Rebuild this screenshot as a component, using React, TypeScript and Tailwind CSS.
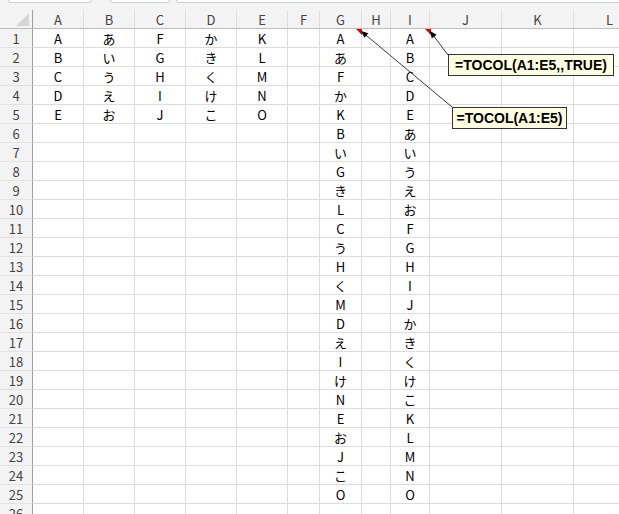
import React from "react";

const cols = [
  { name: "A", w: "w-[51px]" },
  { name: "B", w: "w-[51px]" },
  { name: "C", w: "w-[51px]" },
  { name: "D", w: "w-[51px]" },
  { name: "E", w: "w-[51px]" },
  { name: "F", w: "w-[32px]" },
  { name: "G", w: "w-[42px]" },
  { name: "H", w: "w-[29px]" },
  { name: "I", w: "w-[39px]" },
  { name: "J", w: "w-[72px]" },
  { name: "K", w: "w-[72px]" },
  { name: "L", w: "w-[72px]" },
];

const src = [
  ["A", "B", "C", "D", "E"],
  ["あ", "い", "う", "え", "お"],
  ["F", "G", "H", "I", "J"],
  ["か", "き", "く", "け", "こ"],
  ["K", "L", "M", "N", "O"],
];

// G: row by row, I: column by column
const colG: string[] = [];
for (let r = 0; r < 5; r++) for (let c = 0; c < 5; c++) colG.push(src[c][r]);
const colI: string[] = src.flat();

const cellValue = (row: number, col: number) => {
  if (col < 5 && row < 5) return src[col][row];
  if (col === 6) return colG[row] ?? "";
  if (col === 8) return colI[row] ?? "";
  return "";
};

const arrowHead = (x1: number, y1: number, x2: number, y2: number) => {
  const dx = x2 - x1;
  const dy = y2 - y1;
  const len = Math.hypot(dx, dy);
  const ux = dx / len;
  const uy = dy / len;
  const l = 7;
  const w = 3;
  const bx = x2 - ux * l;
  const by = y2 - uy * l;
  return `${x2},${y2} ${bx - uy * w},${by + ux * w} ${bx + uy * w},${by - ux * w}`;
};

export default function App() {
  const rows = Array.from({ length: 26 }, (_, i) => i);

  return (
    <div
      className="relative w-[619px] h-[514px] overflow-hidden bg-white"
      style={{ fontFamily: '"Noto Sans CJK JP", "Noto Sans", sans-serif' }}
    >
      {/* top strip */}
      <div className="h-[10px] bg-[#f3f3f3] flex gap-[18px] pl-[8px]">
        <div className="w-[84px] h-[3px] bg-white border border-t-0 border-[#d0d0d0] rounded-b-[4px]" />
        <div className="w-[60px] h-[3px] bg-white border border-t-0 border-[#d0d0d0] rounded-b-[4px] -ml-[0px]" />
        <div className="flex-1 h-[3px] bg-white border border-t-0 border-r-0 border-[#d0d0d0] rounded-bl-[4px] -ml-[12px]" />
      </div>

      {/* column headers */}
      <div className="flex h-[19px] bg-[#f3f3f3] border-b border-[#bdbdbd]">
        <div className="relative w-[33px] shrink-0 border-r border-[#9e9e9e]">
          <div className="absolute right-[3px] bottom-[2px] w-0 h-0 border-l-[13px] border-l-transparent border-b-[13px] border-b-[#d6d6d6]" />
        </div>
        {cols.map((c) => (
          <div
            key={c.name}
            className={`${c.w} shrink-0 flex items-center justify-center text-[13px] text-[#444] leading-none border-r border-[#dedede]`}
          >
            {c.name}
          </div>
        ))}
      </div>

      {/* rows */}
      {rows.map((r) => (
        <div key={r} className="flex h-[19px]">
          <div className="w-[33px] shrink-0 bg-[#f3f3f3] border-r border-b border-r-[#9e9e9e] border-b-[#e2e2e2] flex items-center justify-center text-[13px] text-[#444] leading-none">
            {r + 1}
          </div>
          {cols.map((c, ci) => (
            <div
              key={c.name}
              className={`${c.w} shrink-0 border-r border-b border-[#dcdcdc] flex items-center justify-center text-[13px] text-black leading-none`}
            >
              {r < 25 ? cellValue(r, ci) : ""}
            </div>
          ))}
        </div>
      ))}

      {/* comment indicators and arrows */}
      <svg className="absolute left-0 top-0 pointer-events-none" width="619" height="514">
        <polygon points="356,29 362,29 362,35" fill="#e00000" />
        <polygon points="425,29 431,29 431,35" fill="#e00000" />
        <line x1="452" y1="107" x2="361" y2="31" stroke="#3a3a3a" strokeWidth="1" />
        <polygon points={arrowHead(452, 107, 361, 31)} fill="#000" />
        <line x1="448" y1="55" x2="430" y2="31" stroke="#3a3a3a" strokeWidth="1" />
        <polygon points={arrowHead(448, 55, 430, 31)} fill="#000" />
      </svg>

      <div
        className="absolute left-[448px] top-[54px] w-[166px] h-[22px] bg-[#ffffe1] border border-[#333] flex items-center justify-center text-[14px] font-bold text-black leading-none"
        style={{ fontFamily: '"Liberation Sans", Arial, sans-serif' }}
      >
        =TOCOL(A1:E5,,TRUE)
      </div>
      <div
        className="absolute left-[452px] top-[107px] w-[115px] h-[22px] bg-[#ffffe1] border border-[#333] flex items-center justify-center text-[14px] font-bold text-black leading-none"
        style={{ fontFamily: '"Liberation Sans", Arial, sans-serif' }}
      >
        =TOCOL(A1:E5)
      </div>
    </div>
  );
}
